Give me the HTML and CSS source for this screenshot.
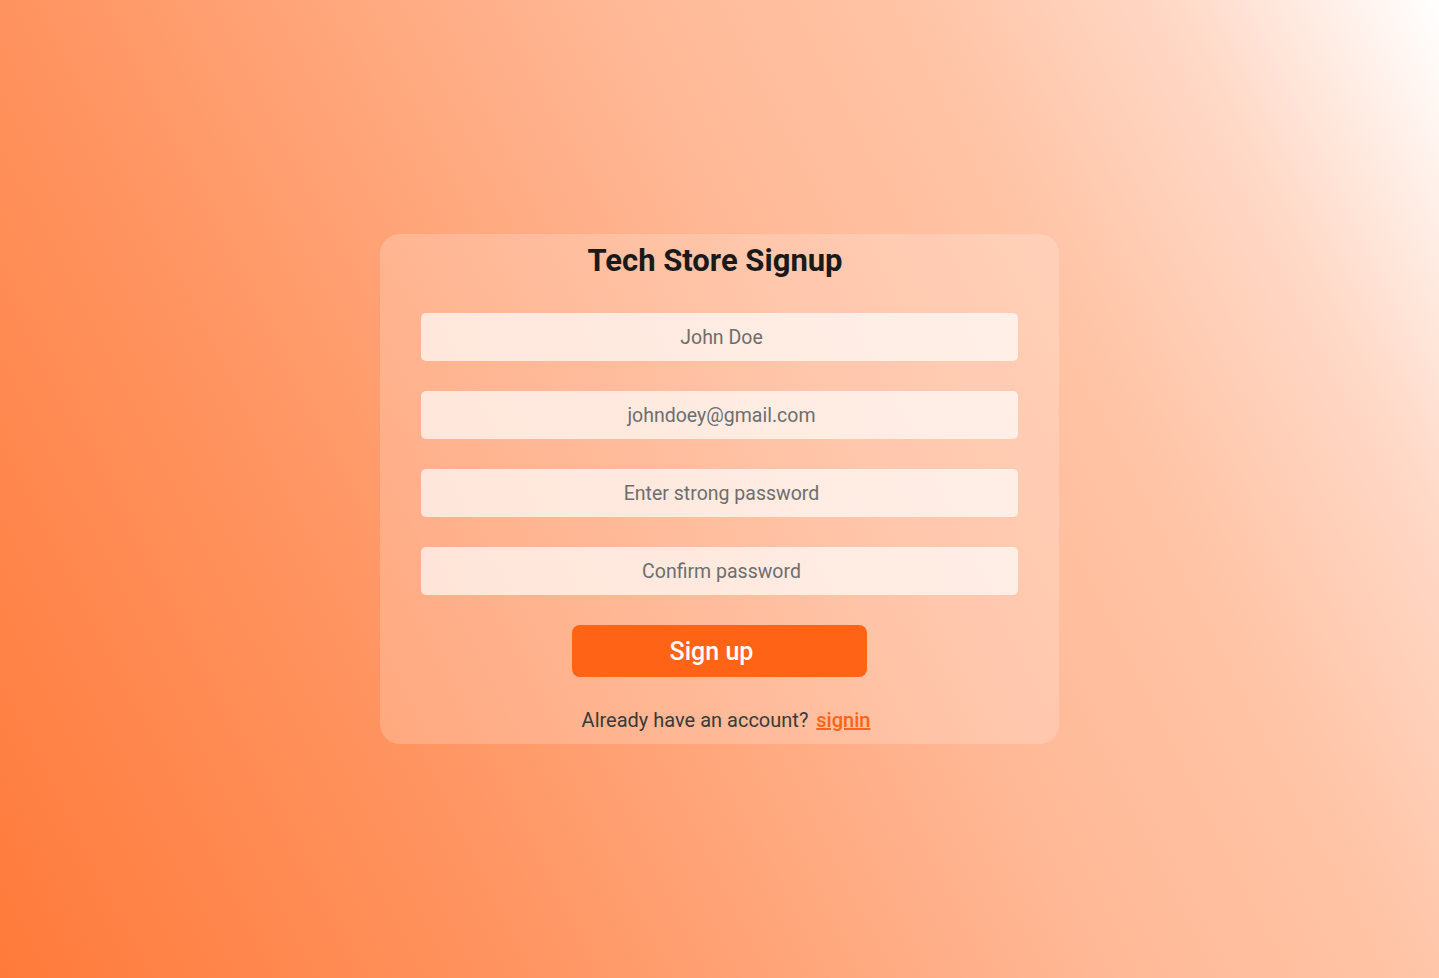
FILE: index.html
```html
<!DOCTYPE html>
<html lang="en">
<head>
<meta charset="utf-8">
<title>Tech Store Signup</title>
<link rel="stylesheet" href="styles.css">
</head>
<body>
<main class="page">
  <form class="card">
    <h1 class="title">Tech Store Signup</h1>
    <input class="field" type="text" placeholder="John Doe">
    <input class="field" type="email" placeholder="johndoey@gmail.com">
    <input class="field" type="password" placeholder="Enter strong password">
    <input class="field" type="password" placeholder="Confirm password">
    <button class="btn" type="button">Sign up</button>
    <p class="alt">Already have an account? <a class="link" href="#">signin</a></p>
  </form>
</main>
</body>
</html>
```

FILE: styles.css
```css
* { box-sizing: border-box; }
html, body { margin: 0; height: 100%; }
body {
  font-family: Roboto, "Noto Sans", sans-serif;
  background: linear-gradient(63deg, #ff7a3a 0%, #ff935f 26%, #ffb997 58%, #ffc4a6 73%, #ffd8c6 86%, #ffffff 100%);
}
.page {
  height: 100%;
  display: flex;
  align-items: center;
  justify-content: center;
}
.card {
  width: 679px;
  height: 510px;
  padding: 10px 41px 0;
  border-radius: 20px;
  background: rgba(255, 255, 255, 0.2);
  display: flex;
  flex-direction: column;
  align-items: center;
}
.title {
  margin: 0 9px 35px 0;
  font-size: 31px;
  line-height: 34px;
  font-weight: 700;
  color: #1a1a1a;
}
.field {
  width: 100%;
  height: 48px;
  margin: 0 0 30px;
  padding: 0 0 0 4px;
  border: none;
  border-radius: 5px;
  background: rgba(255, 255, 255, 0.68);
  font-family: inherit;
  font-size: 19.5px;
  text-align: center;
  color: #333;
  outline: none;
}
.field::placeholder { color: #6e6e6e; }
.btn {
  width: 295px;
  height: 52px;
  padding: 0 16px 0 0;
  border: none;
  border-radius: 8px;
  background: #ff6315;
  color: #fff;
  font-family: inherit;
  font-size: 25px;
  font-weight: 500;
  cursor: pointer;
}
.alt {
  margin: 31px 0 0 13px;
  font-size: 20px;
  line-height: 24px;
  color: #3a3a3a;
}
.link {
  color: #ff6315;
  font-weight: 500;
  margin-left: 3px;
}
```
